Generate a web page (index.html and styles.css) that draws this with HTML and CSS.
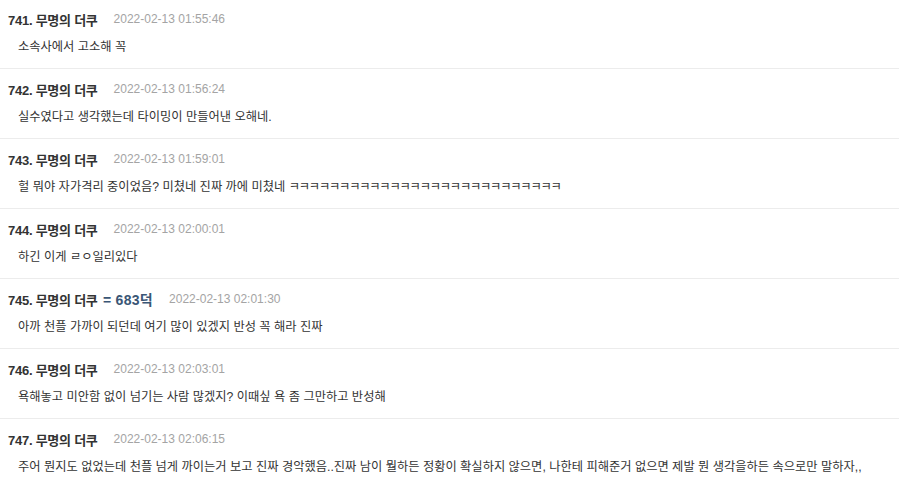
FILE: index.html
```html
<!DOCTYPE html>
<html lang="ko">
<head>
<meta charset="utf-8">
<link rel="stylesheet" href="styles.css">
</head>
<body>
<ul class="thread">
  <li class="post">
    <div class="head"><span class="name">741. 무명의 더쿠</span><span class="date">2022-02-13 01:55:46</span></div>
    <div class="body">소속사에서 고소해 꼭</div>
  </li>
  <li class="post">
    <div class="head"><span class="name">742. 무명의 더쿠</span><span class="date">2022-02-13 01:56:24</span></div>
    <div class="body">실수였다고 생각했는데 타이밍이 만들어낸 오해네.</div>
  </li>
  <li class="post">
    <div class="head"><span class="name">743. 무명의 더쿠</span><span class="date">2022-02-13 01:59:01</span></div>
    <div class="body">헐 뭐야 자가격리 중이었음? 미쳤네 진짜 까에 미쳤네 <span class="kk">ㅋㅋㅋㅋㅋㅋㅋㅋㅋㅋㅋㅋㅋㅋㅋㅋㅋㅋㅋㅋㅋㅋㅋㅋㅋㅋㅋ</span></div>
  </li>
  <li class="post">
    <div class="head"><span class="name">744. 무명의 더쿠</span><span class="date">2022-02-13 02:00:01</span></div>
    <div class="body">하긴 이게 ㄹㅇ일리있다</div>
  </li>
  <li class="post">
    <div class="head"><span class="name">745. 무명의 더쿠 <span class="tag">= 683덕</span></span><span class="date">2022-02-13 02:01:30</span></div>
    <div class="body">아까 천플 가까이 되던데 여기 많이 있겠지 반성 꼭 해라 진짜</div>
  </li>
  <li class="post">
    <div class="head"><span class="name">746. 무명의 더쿠</span><span class="date">2022-02-13 02:03:01</span></div>
    <div class="body">욕해놓고 미안함 없이 넘기는 사람 많겠지? 이때싶 욕 좀 그만하고 반성해</div>
  </li>
  <li class="post">
    <div class="head"><span class="name">747. 무명의 더쿠</span><span class="date">2022-02-13 02:06:15</span></div>
    <div class="body">주어 뭔지도 없었는데 천플 넘게 까이는거 보고 진짜 경악했음..진짜 남이 뭘하든 정황이 확실하지 않으면, 나한테 피해준거 없으면 제발 뭔 생각을하든 속으로만 말하자,,</div>
  </li>
</ul>
</body>
</html>
```
FILE: styles.css
```css
html, body {
  margin: 0;
  padding: 0;
  background: #fff;
}
body {
  font-family: "Liberation Sans", "Noto Sans CJK KR", sans-serif;
  color: #333;
}
.thread {
  list-style: none;
  margin: 0;
  padding: 0;
}
.post {
  padding: 10px 0 11px;
  border-bottom: 1px solid #ececec;
}
.post:first-child {
  padding-top: 9px;
}
.head {
  display: flex;
  align-items: center;
  gap: 16px;
  height: 20px;
  padding-left: 8px;
  white-space: nowrap;
}
.name {
  font-size: 13px;
  font-weight: bold;
  letter-spacing: -0.25px;
  color: #333;
}
.tag {
  margin-left: 2px;
  font-size: 14px;
  letter-spacing: 0.3px;
  color: #3a5676;
}
.date {
  font-size: 12px;
  color: #a4a4a4;
}
.body {
  margin-top: 8px;
  height: 20px;
  line-height: 20px;
  padding-left: 18px;
  font-size: 12.25px;
  color: #333;
  white-space: nowrap;
}
.kk {
  letter-spacing: -1.2px;
}
```
